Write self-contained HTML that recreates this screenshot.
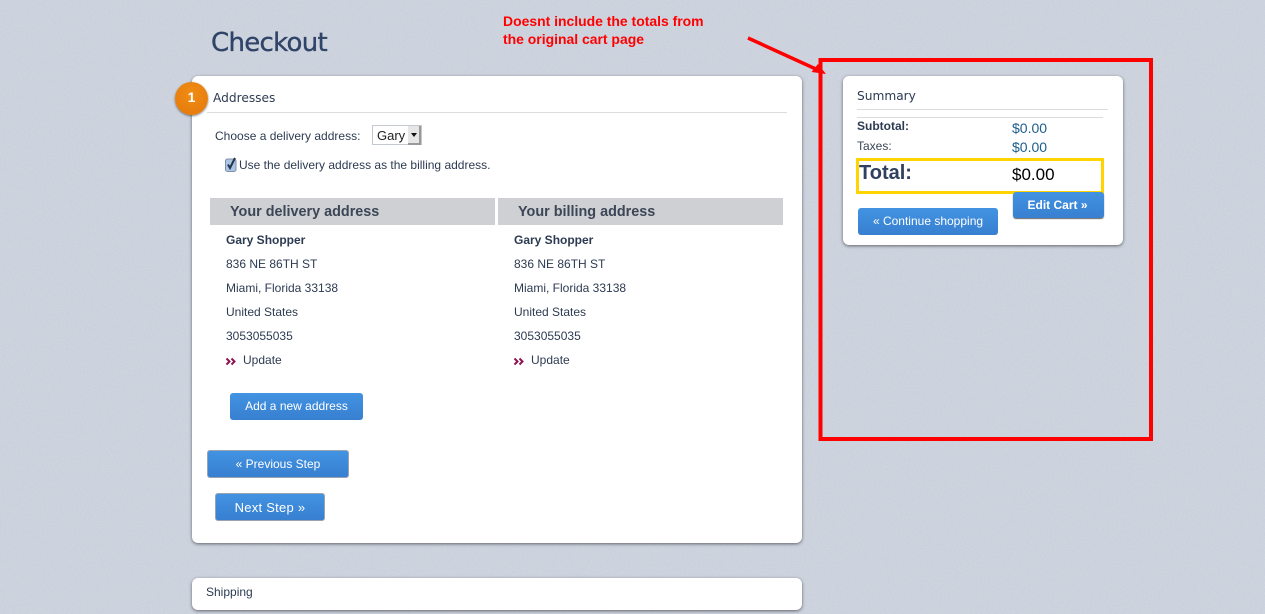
<!DOCTYPE html>
<html><head><meta charset="utf-8"><style>
html,body{margin:0;padding:0}
body{width:1265px;height:614px;overflow:hidden;position:relative;background:#cbd1dc;font-family:"Liberation Sans",sans-serif;color:#2d3b52;font-size:12px}
.a{position:absolute;white-space:nowrap}
.card{position:absolute;background:#fff;border-radius:6px;box-shadow:0 1px 3px rgba(60,60,70,.75)}
.btn{position:absolute;box-sizing:border-box;background:linear-gradient(#4293e2,#387fd0);color:#fff;border-radius:3px;text-align:center;font-size:12px;white-space:nowrap}
.hr{position:absolute;height:1px;background:#dcdcdf}
.gh{position:absolute;background:#cfd0d4;height:27px;line-height:29px;font-weight:bold;font-size:14.4px;color:#3c4656;box-sizing:border-box}
</style></head><body>
<svg class="a" style="left:0;top:0" width="1265" height="614"><filter id="n" x="0" y="0" width="100%" height="100%"><feTurbulence type="fractalNoise" baseFrequency="0.7" numOctaves="2" seed="4"/><feColorMatrix type="matrix" values="0 0 0 0 1 0 0 0 0 1 0 0 0 0 1 0 0 0 0.9 -0.3"/></filter><rect width="1265" height="614" filter="url(#n)" opacity="0.25"/></svg>
<div class="a" style="left:211px;top:26px;font-family:'DejaVu Sans','Liberation Sans',sans-serif;font-size:26px;line-height:34px;color:#2f4468;letter-spacing:-.7px;-webkit-text-stroke:.35px #2f4468">Checkout</div>
<div class="a" style="left:503px;top:12px;font-size:13.95px;font-weight:bold;color:#f00;line-height:18px">Doesnt include the totals from<br>the original cart page</div>

<div class="card" style="left:192px;top:76px;width:610px;height:467px"></div>
<div class="a" style="left:175px;top:82px;width:33px;height:33px;border-radius:50%;background:radial-gradient(circle at 50% 35%,#f08c14,#e4780a);box-shadow:0 1px 2px rgba(60,60,60,.7);color:#fff;font-weight:bold;font-size:14px;line-height:30px;text-align:center">1</div>
<div class="a" style="left:213px;top:90px;font-family:'DejaVu Sans',sans-serif;font-size:12.2px;line-height:16px;color:#2d3b52">Addresses</div>
<div class="hr" style="left:207px;top:112px;width:580px"></div>
<div class="a" style="left:215px;top:129px;line-height:14px">Choose a delivery address:</div>
<div class="a" style="left:372px;top:125px;width:50px;height:20px;box-sizing:border-box;border:1px solid #c4c8d0;background:#fff;font-size:13px;line-height:19px;padding-left:4px;color:#222">Gary<span style="position:absolute;left:35px;top:0;height:17px;background:#e6e6e6;border-right:2px solid #999;border-bottom:2px solid #999;box-sizing:content-box;width:11px"></span><span style="position:absolute;left:38px;top:7px;width:0;height:0;border-left:3.5px solid transparent;border-right:3.5px solid transparent;border-top:4px solid #111"></span></div>
<svg class="a" style="left:224px;top:156px" width="14" height="18"><rect x="1.5" y="3" width="10.5" height="12.5" rx="2" fill="#a9c6e4" stroke="#8290a6"/><path d="M4 8.5l2 3.5L11 2" fill="none" stroke="#26354c" stroke-width="2"/></svg>
<div class="a" style="left:239px;top:158px;line-height:14px">Use the delivery address as the billing address.</div>

<div class="gh" style="left:210px;top:198px;width:285px;padding-left:20px">Your delivery address</div>
<div class="gh" style="left:498px;top:198px;width:285px;padding-left:20px">Your billing address</div>

<div class="a" style="left:226px;top:228px;line-height:24px"><b>Gary Shopper</b><br>836 NE 86TH ST<br>Miami, Florida 33138<br>United States<br>3053055035</div>
<div class="a" style="left:514px;top:228px;line-height:24px"><b>Gary Shopper</b><br>836 NE 86TH ST<br>Miami, Florida 33138<br>United States<br>3053055035</div>
<svg class="a" style="left:225px;top:357px" width="12" height="9"><path d="M1.5 1.5L4.5 4.5L1.5 7.5M6.5 1.5L9.5 4.5L6.5 7.5" fill="none" stroke="#8c1450" stroke-width="2"/></svg>
<div class="a" style="left:243px;top:353px;line-height:14px">Update</div>
<svg class="a" style="left:513px;top:357px" width="12" height="9"><path d="M1.5 1.5L4.5 4.5L1.5 7.5M6.5 1.5L9.5 4.5L6.5 7.5" fill="none" stroke="#8c1450" stroke-width="2"/></svg>
<div class="a" style="left:531px;top:353px;line-height:14px">Update</div>

<div class="btn" style="left:230px;top:393px;width:133px;height:27px;line-height:26px">Add a new address</div>
<div class="btn" style="left:207px;top:450px;width:142px;height:28px;line-height:27px;border:1px solid #9aa3b0">« Previous Step</div>
<div class="btn" style="left:215px;top:493px;width:110px;height:28px;line-height:27px;border:1px solid #9aa3b0;font-size:13px;letter-spacing:.25px">Next Step »</div>

<div class="card" style="left:192px;top:578px;width:610px;height:32px"></div>
<div class="a" style="left:206px;top:585px;line-height:14px">Shipping</div>

<div class="card" style="left:843px;top:76px;width:280px;height:169px"></div>
<div class="a" style="left:857px;top:88px;font-family:'DejaVu Sans',sans-serif;font-size:12.2px;line-height:16px">Summary</div>
<div class="hr" style="left:857px;top:109px;width:251px"></div>
<div class="hr" style="left:857px;top:117px;width:246px"></div>
<div class="a" style="left:857px;top:119px;line-height:14px;font-weight:bold">Subtotal:</div>
<div class="a" style="left:1012px;top:120px;line-height:16px;font-size:14px;color:#1c5d8c">$0.00</div>
<div class="a" style="left:857px;top:139px;line-height:14px;color:#3c4656">Taxes:</div>
<div class="a" style="left:1012px;top:139px;line-height:16px;font-size:14px;color:#1c5d8c">$0.00</div>
<div class="a" style="left:856px;top:158px;width:248px;height:36px;box-sizing:border-box;border:3px solid #ffd400"></div>
<div class="a" style="left:859px;top:161px;line-height:24px;font-size:20px;font-weight:bold;color:#2f4060">Total:</div>
<div class="a" style="left:1012px;top:165px;line-height:20px;font-size:17px;color:#000">$0.00</div>
<div class="btn" style="left:1013px;top:192px;width:91px;height:26px;line-height:26px;font-weight:bold;box-shadow:0 1px 1px #666;text-indent:-2px">Edit Cart »</div>
<div class="btn" style="left:858px;top:208px;width:140px;height:27px;line-height:27px">« Continue shopping</div>

<svg class="a" style="left:0;top:0" width="1265" height="614">
<rect x="820.5" y="60" width="330.5" height="379" fill="none" stroke="#f00" stroke-width="4"/>
<path d="M748 38L818 70" stroke="#f00" stroke-width="3.5" fill="none"/>
<path d="M826 74L811.5 72L818 64Z" fill="#f00"/>
</svg>
</body></html>
